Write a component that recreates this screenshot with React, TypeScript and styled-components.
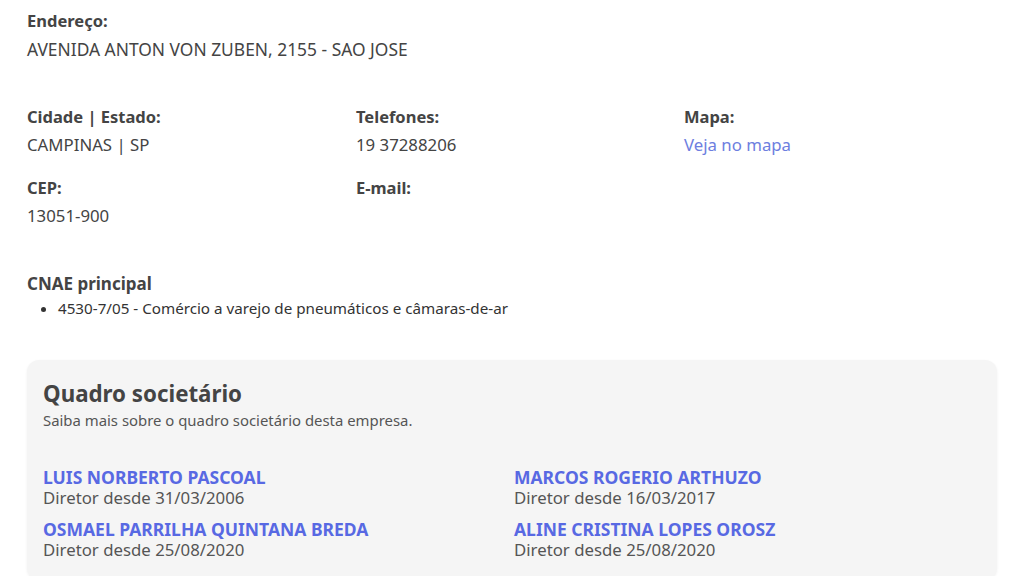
import styled, { createGlobalStyle } from "styled-components";

const GlobalStyle = createGlobalStyle`
  body {
    margin: 0;
    background: #ffffff;
    font-family: "Noto Sans", "Open Sans", sans-serif;
    color: #444444;
  }
`;

const socios = [
  { nome: "LUIS NORBERTO PASCOAL", desde: "31/03/2006" },
  { nome: "MARCOS ROGERIO ARTHUZO", desde: "16/03/2017" },
  { nome: "OSMAEL PARRILHA QUINTANA BREDA", desde: "25/08/2020" },
  { nome: "ALINE CRISTINA LOPES OROSZ", desde: "25/08/2020" },
];

function App() {
  return (
    <>
      <GlobalStyle />
      <Page>
        <Field>
          <Label>Endereço:</Label>
          <Value $wide>AVENIDA ANTON VON ZUBEN, 2155 - SAO JOSE</Value>
        </Field>

        <InfoGrid>
          <Field>
            <Label>Cidade | Estado:</Label>
            <Value>CAMPINAS | SP</Value>
          </Field>
          <Field>
            <Label>Telefones:</Label>
            <Value>19 37288206</Value>
          </Field>
          <Field>
            <Label>Mapa:</Label>
            <Value>
              <MapLink href="#">Veja no mapa</MapLink>
            </Value>
          </Field>
          <Field>
            <Label>CEP:</Label>
            <Value>13051-900</Value>
          </Field>
          <Field>
            <Label>E-mail:</Label>
            <Value></Value>
          </Field>
        </InfoGrid>

        <Cnae>
          <CnaeTitle>CNAE principal</CnaeTitle>
          <CnaeList>
            <li>4530-7/05 - Comércio a varejo de pneumáticos e câmaras-de-ar</li>
          </CnaeList>
        </Cnae>

        <Card>
          <CardTitle>Quadro societário</CardTitle>
          <CardSubtitle>Saiba mais sobre o quadro societário desta empresa.</CardSubtitle>
          <SociosGrid>
            {socios.map((s) => (
              <Socio key={s.nome}>
                <SocioNome href="#">{s.nome}</SocioNome>
                <SocioDesde>Diretor desde {s.desde}</SocioDesde>
              </Socio>
            ))}
          </SociosGrid>
        </Card>
      </Page>
    </>
  );
}

const Page = styled.div`
  padding: 7px 27px 0 27px;
  width: 970px;
`;

const Field = styled.div`
  display: flex;
  flex-direction: column;
  min-height: 56px;
`;

const Label = styled.div`
  font-size: 16.5px;
  font-weight: 700;
  line-height: 28px;
  color: #444444;
`;

const Value = styled.div<{ $wide?: boolean }>`
  font-size: ${(p) => (p.$wide ? "17.4px" : "16.8px")};
  line-height: 28px;
  min-height: 28px;
  color: #444444;
  white-space: nowrap;
`;

const MapLink = styled.a`
  color: #6d7ee0;
  text-decoration: none;
`;

const InfoGrid = styled.div`
  margin-top: 40px;
  display: grid;
  grid-template-columns: 329px 328px 1fr;
  row-gap: 15px;
`;

const Cnae = styled.div`
  margin-top: 40px;
`;

const CnaeTitle = styled.div`
  font-size: 17px;
  font-weight: 700;
  line-height: 28px;
  color: #444444;
`;

const CnaeList = styled.ul`
  margin: 0;
  padding-left: 31px;
  font-size: 15.2px;
  line-height: 20px;
  color: #333333;
`;

const Card = styled.div`
  margin-top: 42px;
  background: #f5f5f5;
  border-radius: 12px;
  box-shadow: 0 1px 3px rgba(0, 0, 0, 0.06);
  padding: 18px 16px 20px 16px;
`;

const CardTitle = styled.h2`
  margin: 0;
  font-size: 22.3px;
  font-weight: 700;
  line-height: 32px;
  color: #444444;
`;

const CardSubtitle = styled.p`
  margin: 0;
  font-size: 14.9px;
  line-height: 20px;
  color: #555555;
`;

const SociosGrid = styled.div`
  margin-top: 37px;
  display: grid;
  grid-template-columns: 471px 1fr;
  row-gap: 11px;
`;

const Socio = styled.div`
  display: flex;
  flex-direction: column;
`;

const SocioNome = styled.a`
  font-size: 17.5px;
  font-weight: 700;
  line-height: 21px;
  color: #5869e3;
  text-decoration: none;
  white-space: nowrap;
`;

const SocioDesde = styled.span`
  font-size: 16.8px;
  line-height: 20px;
  color: #555555;
`;

export default App;
